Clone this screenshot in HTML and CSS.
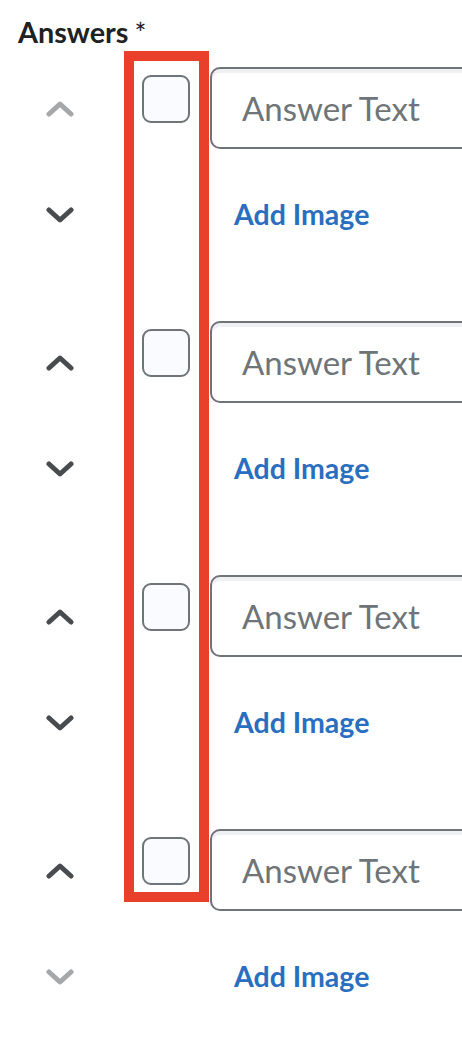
FILE: index.html
```html
<!DOCTYPE html>
<html>
<head>
<meta charset="utf-8">
<link rel="stylesheet" href="styles.css">
</head>
<body>
<div class="page">
  <div class="header"><span class="label">Answers</span><span class="req">*</span></div>
  <div class="list">
    <div class="row">
      <div class="order">
        <svg class="chev up disabled" width="28" height="16" viewBox="0 0 28 16"><polyline points="3,13 14,3 25,13"/></svg>
        <svg class="chev down" width="28" height="16" viewBox="0 0 28 16"><polyline points="3,3 14,13 25,3"/></svg>
      </div>
      <div class="check"></div>
      <div class="content">
        <div class="input">Answer Text</div>
        <div class="add">Add Image</div>
      </div>
    </div>
    <div class="row">
      <div class="order">
        <svg class="chev up" width="28" height="16" viewBox="0 0 28 16"><polyline points="3,13 14,3 25,13"/></svg>
        <svg class="chev down" width="28" height="16" viewBox="0 0 28 16"><polyline points="3,3 14,13 25,3"/></svg>
      </div>
      <div class="check"></div>
      <div class="content">
        <div class="input">Answer Text</div>
        <div class="add">Add Image</div>
      </div>
    </div>
    <div class="row">
      <div class="order">
        <svg class="chev up" width="28" height="16" viewBox="0 0 28 16"><polyline points="3,13 14,3 25,13"/></svg>
        <svg class="chev down" width="28" height="16" viewBox="0 0 28 16"><polyline points="3,3 14,13 25,3"/></svg>
      </div>
      <div class="check"></div>
      <div class="content">
        <div class="input">Answer Text</div>
        <div class="add">Add Image</div>
      </div>
    </div>
    <div class="row">
      <div class="order">
        <svg class="chev up" width="28" height="16" viewBox="0 0 28 16"><polyline points="3,13 14,3 25,13"/></svg>
        <svg class="chev down disabled" width="28" height="16" viewBox="0 0 28 16"><polyline points="3,3 14,13 25,3"/></svg>
      </div>
      <div class="check"></div>
      <div class="content">
        <div class="input">Answer Text</div>
        <div class="add">Add Image</div>
      </div>
    </div>
  </div>
  <div class="highlight"></div>
</div>
</body>
</html>
```

FILE: styles.css
```css
html, body {
  margin: 0;
  padding: 0;
  background: #ffffff;
}
body {
  font-family: Lato, "Noto Sans", sans-serif;
  color: #202122;
}
.page {
  position: relative;
  width: 462px;
  height: 1038px;
  overflow: hidden;
}
.header {
  padding: 15px 0 0 18px;
  height: 51px;
  box-sizing: border-box;
  display: flex;
  align-items: flex-start;
}
.label {
  font-size: 28.8px;
  font-weight: 700;
  line-height: 34px;
}
.req {
  font-size: 28px;
  line-height: 28px;
  margin-left: 6px;
  margin-top: 4px;
}
.list {
  padding-top: 16px;
}
.row {
  display: flex;
  height: 254px;
}
.order {
  margin-left: 46px;
  width: 28px;
  display: flex;
  flex-direction: column;
  padding-top: 34px;
}
.chev {
  display: block;
  fill: none;
  stroke: #494c4e;
  stroke-width: 5;
  stroke-linecap: round;
  stroke-linejoin: round;
}
.chev.down {
  margin-top: 90px;
}
.chev.disabled {
  stroke: #a5a7a9;
}
.check {
  margin-left: 68px;
  margin-top: 8px;
  width: 48px;
  height: 48px;
  box-sizing: border-box;
  border: 2px solid #6e7477;
  border-radius: 9px;
  background: #f9fbff;
  flex-shrink: 0;
}
.content {
  margin-left: 20px;
  flex: 1;
  min-width: 0;
}
.input {
  height: 82px;
  width: 300px;
  box-sizing: border-box;
  border: 2px solid #6e7477;
  border-radius: 10px;
  box-shadow: inset 0 4px 0 0 rgba(177, 185, 190, 0.22);
  display: flex;
  align-items: center;
  padding-left: 30px;
  font-size: 33px;
  color: #6e7477;
  white-space: nowrap;
}
.add {
  margin-top: 48px;
  margin-left: 24px;
  font-size: 28.5px;
  line-height: 34px;
  font-weight: 700;
  color: #2a6ebf;
}
.highlight {
  position: absolute;
  left: 124px;
  top: 51px;
  width: 85px;
  height: 851px;
  box-sizing: border-box;
  border: 10px solid #e8402a;
}
```
